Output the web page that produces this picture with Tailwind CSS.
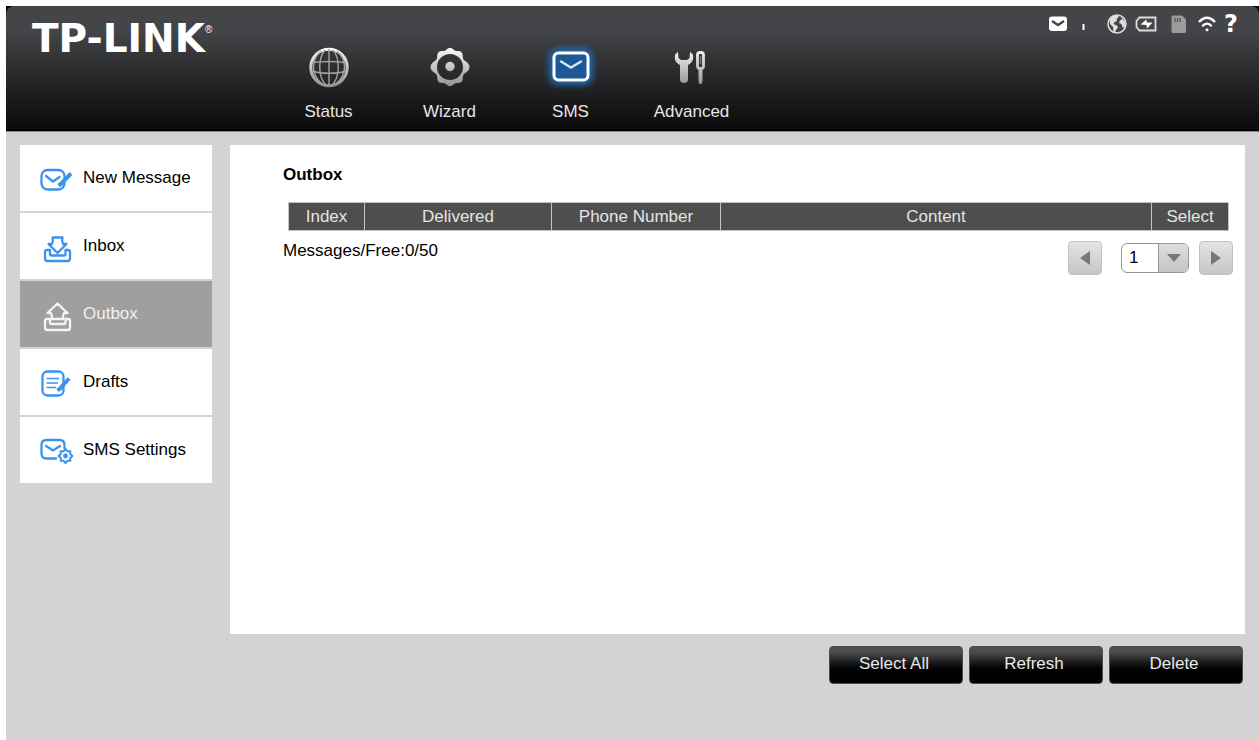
<!DOCTYPE html>
<html lang="en">
<head>
  <meta charset="UTF-8" />
  <meta name="viewport" content="width=device-width, initial-scale=1.0" />
  <title>TP-LINK - Outbox</title>
  <script src="https://cdn.jsdelivr.net/npm/@tailwindcss/browser@4"></script>
</head>
<body class="bg-white pt-1.5 pl-1.5 min-h-screen flex flex-col text-[17px] leading-5 text-black font-['Liberation_Sans',Arial,sans-serif]">

  <!-- Header -->
  <header class="bg-black border-b border-[#8a8a8a]">
    <div class="flex h-[125px] rounded-t-lg border-b-2 border-black bg-linear-to-b from-[#444548] from-20% to-[#0b0b0b] text-[#e6e6e6]">

      <a href="#" class="flex items-start w-[262px] pl-[26px] pt-3.5 text-white">
        <span class="text-[39px] leading-[38px] font-bold font-['DejaVu_Sans',sans-serif]">TP-LINK</span>
        <span class="text-[10px]">®</span>
      </a>

      <nav class="flex pt-[38px]">
        <a href="#" class="w-[121px] flex flex-col items-center gap-2.5">
          <svg class="w-12 h-12" viewBox="0 0 48 48" fill="none">
            <defs>
              <linearGradient id="silver" gradientUnits="userSpaceOnUse" x1="0" y1="4" x2="0" y2="44">
                <stop offset="0" stop-color="#fafafa" />
                <stop offset="1" stop-color="#8c8c8c" />
              </linearGradient>
            </defs>
            <circle cx="24" cy="23.500" r="18.200" stroke="url(#silver)" stroke-width="3" />
            <g stroke="#a2a2a2" stroke-width="1.4">
              <path d="M24 5v36" />
              <path d="M20 6C13 14 13 32 20 40" />
              <path d="M28 6c7 8 7 26 0 34" />
              <path d="M16 7C6 16 6 30 16 39" />
              <path d="M32 7c10 9 10 23 0 32" />
              <path d="M7 19c9-2 25-2 34 0" />
              <path d="M7 27c9 3 25 3 34 0" />
            </g>
          </svg>
          <span>Status</span>
        </a>
        <a href="#" class="w-[121px] flex flex-col items-center gap-2.5">
          <svg class="w-12 h-12" viewBox="0 0 48 48">
            <g fill="url(#silver)">
              <path fill-rule="evenodd" d="M20.500 5.500Q24 2 27.500 5.500Q29 7.200 31 7Q37 6.500 36.800 12.500Q36.600 15 38.500 16.500Q43.500 19.500 43.500 23Q43.500 26.500 38.500 29.500Q36.600 31 36.800 33.500Q37 39.500 31 39Q29 38.800 27.500 40.500Q24 44 20.500 40.500Q19 38.800 17 39Q11 39.500 11.200 33.500Q11.400 31 9.500 29.500Q4.500 26.500 4.500 23Q4.500 19.500 9.500 16.500Q11.400 15 11.200 12.500Q11 6.500 17 7Q19 7.200 20.500 5.500ZM24 10a13 13 0 1 0 0 26a13 13 0 1 0 0-26Z" />
              <circle cx="24" cy="22.500" r="4.700" />
            </g>
          </svg>
          <span>Wizard</span>
        </a>
        <a href="#" class="w-[121px] flex flex-col items-center gap-2.5">
          <svg class="w-12 h-12 overflow-visible" viewBox="0 0 48 48" fill="none">
            <defs>
              <filter id="glow" x="-40%" y="-40%" width="180%" height="180%">
                <feGaussianBlur stdDeviation="3" />
              </filter>
            </defs>
            <rect x="2" y="4" width="44" height="37" rx="9" fill="#2268b0" filter="url(#glow)" />
            <rect x="7" y="9" width="34" height="27" rx="4.500" fill="#1d5796" stroke="#fff" stroke-width="3" />
            <path d="M14 17.500l10 6l10-6" stroke="#d7e6f5" stroke-width="2.400" stroke-linecap="round" />
          </svg>
          <span>SMS</span>
        </a>
        <a href="#" class="w-[121px] flex flex-col items-center gap-2.5">
          <svg class="w-12 h-12" viewBox="0 0 48 48" fill="none">
            <path fill="url(#silver)" d="M10 8L7.500 10C5.500 15 8 19 12 21V36Q12.500 39 16 39Q19.500 39 20 36V21C24 19 26.500 15 24.500 10L22 8L21.500 14L19 16H13L10.500 14Z" />
            <rect x="29.500" y="8.500" width="6" height="16" rx="2.500" stroke="url(#silver)" stroke-width="2.800" />
            <path d="M32.500 12v8" stroke="#777" stroke-width="1.500" />
            <path fill="url(#silver)" d="M30.500 25h4v12l-1 3h-2l-1-3Z" />
          </svg>
          <span>Advanced</span>
        </a>
      </nav>

      <!-- Device status icons -->
      <div class="ml-auto mr-[21px] flex items-center h-[35px] text-white">
        <svg class="w-5 h-4" viewBox="0 0 20 16" fill="none">
          <rect x="1" y="0.500" width="18" height="14.500" rx="3" fill="#fff" />
          <path d="M4 5l6 4l6-4" stroke="#444548" stroke-width="2.300" />
        </svg>
        <svg class="ml-3.5 w-[3px] h-4" viewBox="0 0 3 16"><rect x="0.500" y="8" width="2" height="6" fill="#fff" /></svg>
        <svg class="ml-[22px] w-5 h-5" viewBox="0 0 20 20">
          <circle cx="10" cy="10" r="9" fill="none" stroke="#dedede" stroke-width="1.500" />
          <path fill="#dedede" d="M6 2L12 1.500L11 4L9.500 5L10 7L7.500 8L6.500 10L10 11.500L11 13.500L9 16L8 19L6.500 18L6 13L3 10L2.500 6ZM14 3L17.500 7L18.500 11L17 14L15.500 13L14.500 10L12 9L13 6.500L15 5.500Z" />
        </svg>
        <svg class="ml-2 w-[22px] h-5" viewBox="0 0 22 20" fill="none">
          <path d="M4.500 3.500H20.500V16.500H4.500L1.500 13V7Z" stroke="#dedede" stroke-width="1.800" />
          <path fill="#fff" d="M5.500 10.500L11.500 5.500L11.800 8.500H17.500L12 14.500L11.500 11Z" />
        </svg>
        <svg class="ml-3.5 w-4 h-5" viewBox="0 0 16 20">
          <path fill="#9b9b9b" d="M2 1.500H11L15 5.500V17.500Q15 19 13.500 19H2Q0.500 19 0.500 17.500V3Q0.500 1.500 2 1.500Z" />
          <path d="M4 4v4M6.500 4v4M9 4v4" stroke="#505050" stroke-width="1.200" />
        </svg>
        <svg class="ml-[11px] w-[18px] h-5" viewBox="0 0 18 20" fill="none" stroke="#fff" stroke-width="2.400">
          <path d="M1 8Q9-0.500 17 8" />
          <path d="M4.300 12.200Q9 7 13.700 12.200" />
          <circle cx="9" cy="15.800" r="1.500" fill="#fff" stroke="none" />
        </svg>
        <a href="#" class="ml-2 text-[24px] font-bold font-['DejaVu_Sans',sans-serif]">?</a>
      </div>
    </div>
  </header>

  <div class="grow bg-[#d3d3d3] pt-[13px] pl-3.5 pr-3.5 pb-14">
    <div class="flex items-stretch gap-[18px]">

      <!-- Side menu -->
      <nav class="w-48 shrink-0 flex flex-col gap-0.5">
        <a href="#" class="h-[66px] flex items-center gap-[9px] pl-[18px] bg-white">
          <svg class="w-9 h-9" viewBox="0 0 36 36" fill="none" stroke="#3b92ee" stroke-width="2.300">
            <rect x="3.500" y="10" width="23" height="19.500" rx="6" />
            <path d="M8 16l7 5.500l6.500-4.500" stroke-linecap="round" />
            <path d="M33 13.500L23.500 23.500L20.500 25.500" stroke-width="4" />
          </svg>
          New Message
        </a>
        <a href="#" class="h-[66px] flex items-center gap-[9px] pl-[18px] bg-white">
          <svg class="w-9 h-9" viewBox="0 0 36 36" fill="none" stroke="#3b92ee" stroke-width="2.300">
            <path d="M14.500 9.500H24.500Q23.500 13.500 25 16H28.500L19.500 25L10.500 16H14Q15.500 13.500 14.500 9.500Z" stroke-linejoin="round" />
            <path d="M12 22H9Q7 22 7 24V30.500Q7 33 9.500 33H29.500Q32 33 32 30.500V24Q32 22 30 22H27.500V26Q27.500 27.500 26 27.500H13.500Q12 27.500 12 26Z" stroke-linejoin="round" />
          </svg>
          Inbox
        </a>
        <a href="#" class="h-[66px] flex items-center gap-[9px] pl-[18px] bg-[#9f9f9f] text-[#f0f0f0]">
          <svg class="w-9 h-9" viewBox="0 0 36 36" fill="none" stroke="#f4f4f4" stroke-width="2.300">
            <path d="M19.500 7.500L29.500 17H26Q24.500 19.500 25.500 23H13.500Q14.500 19.500 13 17H9.500Z" stroke-linejoin="round" />
            <path d="M12 23H9Q7 23 7 25V31.500Q7 34 9.500 34H29.500Q32 34 32 31.500V25Q32 23 30 23H27.500V26.500Q27.500 28 26 28H13.500Q12 28 12 26.500Z" stroke-linejoin="round" />
          </svg>
          Outbox
        </a>
        <a href="#" class="h-[66px] flex items-center gap-[9px] pl-[18px] bg-white">
          <svg class="w-9 h-9" viewBox="0 0 36 36" fill="none" stroke="#3b92ee" stroke-width="2.300">
            <rect x="4.500" y="7.500" width="21" height="24" rx="5" />
            <path d="M8.500 14.500H21M8.500 19H20M8.500 23.500H18" stroke-width="1.500" />
            <path d="M31 14.500L22 24.500L19.500 26.500" stroke-width="4" />
          </svg>
          Drafts
        </a>
        <a href="#" class="h-[66px] flex items-center gap-[9px] pl-[18px] bg-white">
          <svg class="w-9 h-9" viewBox="0 0 36 36" fill="none" stroke="#3b92ee" stroke-width="2.300">
            <path d="M26.500 17V13Q26.500 8 21.500 8H8.500Q3.500 8 3.500 13V21.500Q3.500 26.500 8.500 26.500H19" />
            <path d="M8 14l7 4.500l7-4.500" stroke-linecap="round" />
            <path fill="#fff" stroke-width="2" stroke-linejoin="round" d="M27.500 17L29.600 19.300L32.300 19.200L32.200 21.900L34.500 24L32.200 26.100L32.300 28.800L29.600 28.700L27.500 31L25.400 28.700L22.700 28.800L22.800 26.100L20.500 24L22.800 21.900L22.700 19.200L25.400 19.300Z" />
            <circle cx="27.500" cy="24" r="2.400" fill="#3b92ee" stroke="none" />
          </svg>
          SMS Settings
        </a>
      </nav>

      <!-- Outbox -->
      <main class="grow bg-white min-h-[489px] pt-5 pl-[53px] pr-3">
        <h1 class="font-bold">Outbox</h1>

        <div class="mt-[17px] ml-[5px] mr-1">
          <table class="w-full table-fixed border-collapse border border-[#c4c4c4] bg-[#4e4e4e] text-[#e4e4e4]">
            <thead>
              <tr class="h-7">
                <th scope="col" class="w-[76px] p-0 font-normal border border-[#c4c4c4]">Index</th>
                <th scope="col" class="w-[187px] p-0 font-normal border border-[#c4c4c4]">Delivered</th>
                <th scope="col" class="w-[169px] p-0 font-normal border border-[#c4c4c4]">Phone Number</th>
                <th scope="col" class="p-0 font-normal border border-[#c4c4c4]">Content</th>
                <th scope="col" class="w-[77px] p-0 font-normal border border-[#c4c4c4]">Select</th>
              </tr>
            </thead>
            <tbody></tbody>
          </table>
        </div>

        <div class="mt-2.5 flex items-start justify-between">
          <p>Messages/Free:0/50</p>
          <div class="flex items-center">
            <button type="button" aria-label="Previous page" class="w-[34px] h-[34px] flex items-center justify-center rounded border border-[#c2c2c2] bg-linear-to-b from-[#e4e4e4] to-[#c6c6c6]">
              <svg class="w-3 h-4" viewBox="0 0 12 16"><path fill="#777" d="M11 1V15L1 8Z" /></svg>
            </button>
            <div class="relative ml-[19px] w-[68px] h-[30px]">
              <select aria-label="Page" class="appearance-none w-full h-full pl-[7px] rounded-md border border-[#979797] bg-white">
                <option>1</option>
              </select>
              <span class="absolute right-px top-px bottom-px w-[30px] flex items-center justify-center rounded-r-[5px] border-l border-[#979797] bg-linear-to-b from-[#dedede] to-[#c4c4c4] pointer-events-none">
                <svg class="w-4 h-2.5" viewBox="0 0 16 10"><path fill="#777" d="M1 1H15L8 9Z" /></svg>
              </span>
            </div>
            <button type="button" aria-label="Next page" class="ml-[10px] w-[34px] h-[34px] flex items-center justify-center rounded border border-[#c2c2c2] bg-linear-to-b from-[#e4e4e4] to-[#c6c6c6]">
              <svg class="w-3 h-4" viewBox="0 0 12 16"><path fill="#777" d="M1 1V15L11 8Z" /></svg>
            </button>
          </div>
        </div>
      </main>
    </div>

    <div class="mt-3 mr-0.5 flex justify-end gap-1.5 text-[#e8e8e8]">
      <button type="button" class="w-[134px] h-[38px] pb-0.5 pr-1 rounded border border-[#4c4c4c] bg-linear-to-b from-[#4b4c4f] from-15% to-black to-75%">Select All</button>
      <button type="button" class="w-[134px] h-[38px] pb-0.5 pr-1 rounded border border-[#4c4c4c] bg-linear-to-b from-[#4b4c4f] from-15% to-black to-75%">Refresh</button>
      <button type="button" class="w-[134px] h-[38px] pb-0.5 pr-1 rounded border border-[#4c4c4c] bg-linear-to-b from-[#4b4c4f] from-15% to-black to-75%">Delete</button>
    </div>
  </div>

</body>
</html>
